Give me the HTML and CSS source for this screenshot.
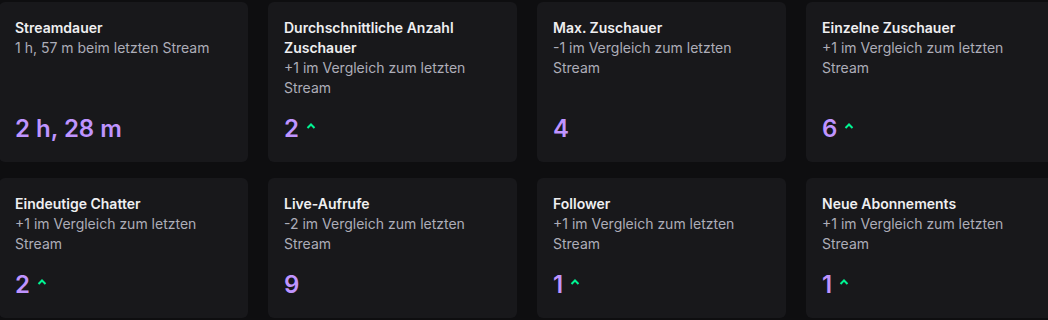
FILE: index.html
```html
<!DOCTYPE html>
<html lang="de">
<head>
<meta charset="utf-8">
<title>Stream-Statistiken</title>
<link rel="stylesheet" href="styles.css">
</head>
<body>
<div class="grid">
  <div class="card">
    <div class="title">Streamdauer</div>
    <div class="sub">1 h, 57 m beim letzten Stream</div>
    <div class="value"><span class="num">2 h, 28 m</span></div>
  </div>
  <div class="card">
    <div class="title">Durchschnittliche Anzahl Zuschauer</div>
    <div class="sub">+1 im Vergleich zum letzten Stream</div>
    <div class="value"><span class="num">2</span><svg class="up" width="12" height="20" viewBox="0 0 12 20"><path d="M2.5 9 L6 5.5 L9.5 9" fill="none" stroke="currentColor" stroke-width="2"/></svg></div>
  </div>
  <div class="card">
    <div class="title">Max. Zuschauer</div>
    <div class="sub">-1 im Vergleich zum letzten Stream</div>
    <div class="value"><span class="num">4</span></div>
  </div>
  <div class="card">
    <div class="title">Einzelne Zuschauer</div>
    <div class="sub">+1 im Vergleich zum letzten Stream</div>
    <div class="value"><span class="num">6</span><svg class="up" width="12" height="20" viewBox="0 0 12 20"><path d="M2.5 9 L6 5.5 L9.5 9" fill="none" stroke="currentColor" stroke-width="2"/></svg></div>
  </div>
  <div class="card">
    <div class="title">Eindeutige Chatter</div>
    <div class="sub">+1 im Vergleich zum letzten Stream</div>
    <div class="value"><span class="num">2</span><svg class="up" width="12" height="20" viewBox="0 0 12 20"><path d="M2.5 9 L6 5.5 L9.5 9" fill="none" stroke="currentColor" stroke-width="2"/></svg></div>
  </div>
  <div class="card">
    <div class="title">Live-Aufrufe</div>
    <div class="sub">-2 im Vergleich zum letzten Stream</div>
    <div class="value"><span class="num">9</span></div>
  </div>
  <div class="card">
    <div class="title">Follower</div>
    <div class="sub">+1 im Vergleich zum letzten Stream</div>
    <div class="value"><span class="num">1</span><svg class="up" width="12" height="20" viewBox="0 0 12 20"><path d="M2.5 9 L6 5.5 L9.5 9" fill="none" stroke="currentColor" stroke-width="2"/></svg></div>
  </div>
  <div class="card">
    <div class="title">Neue Abonnements</div>
    <div class="sub">+1 im Vergleich zum letzten Stream</div>
    <div class="value"><span class="num">1</span><svg class="up" width="12" height="20" viewBox="0 0 12 20"><path d="M2.5 9 L6 5.5 L9.5 9" fill="none" stroke="currentColor" stroke-width="2"/></svg></div>
  </div>
</div>
</body>
</html>
```
FILE: styles.css
```css
html, body {
  margin: 0;
  padding: 0;
  background: #0e0e10;
  overflow: hidden;
}
body {
  width: 1048px;
  height: 320px;
  font-family: Inter, "Noto Sans", sans-serif;
  font-size: 14px;
  line-height: 20px;
  color: #efeff1;
}
.grid {
  display: grid;
  grid-template-columns: repeat(4, 249px);
  column-gap: 20px;
  row-gap: 16px;
  width: 1056px;
  margin: 2px 0 0 -1px;
}
.card {
  background: #18181b;
  border-radius: 6px;
  padding: 16px;
  display: flex;
  flex-direction: column;
  min-width: 0;
}
.title {
  font-weight: 600;
  color: #efeff1;
}
.sub {
  color: #adadb8;
}
.value {
  margin-top: auto;
  padding-top: 14px;
  display: flex;
  align-items: center;
  gap: 6px;
  height: 34px;
}
.num {
  font-size: 24px;
  line-height: 34px;
  font-weight: 600;
  color: #bf94ff;
}
.up {
  color: #00f593;
  display: block;
}
```
